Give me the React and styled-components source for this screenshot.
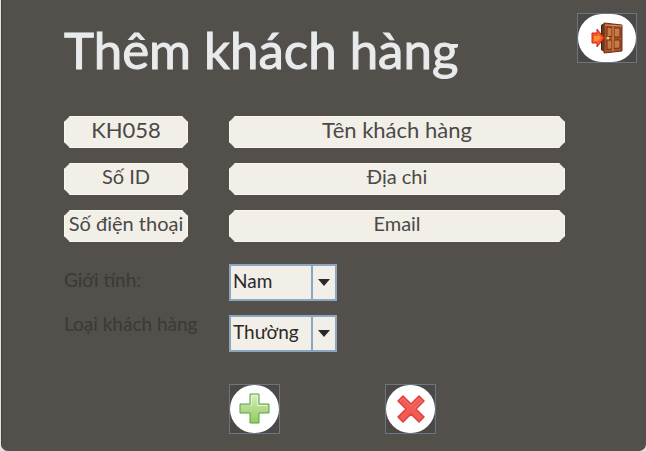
import React, { useState } from "react";
import styled, { createGlobalStyle } from "styled-components";

const GlobalStyle = createGlobalStyle`
  * { box-sizing: border-box; }
  body {
    margin: 0;
    background: #e4e5e6;
    font-family: Lato, "Noto Sans", sans-serif;
  }
`;

const Window = styled.main`
  min-height: 100vh;
  margin-left: 1px;
  padding: 13px 9px 17px 62px;
  background: #534f4a;
  border-left: 1px solid #45423f;
  border-radius: 0 0 7px 7px;
`;

const Header = styled.header`
  display: flex;
  align-items: flex-start;
  justify-content: space-between;
  min-height: 103px;
`;

const Title = styled.h1`
  margin: 4px 0 0;
  color: #e9eaec;
  font-size: 51px;
  font-weight: 400;
  line-height: 66px;
  white-space: nowrap;
  -webkit-text-stroke: 1px #e9eaec;
`;

const Form = styled.form`
  padding-right: 72px;
`;

const Fields = styled.div`
  display: grid;
  grid-template-columns: 124px minmax(0, 1fr);
  gap: 15px 41px;
`;

const TextField = styled.input`
  width: 100%;
  height: 32px;
  padding: 0 0 6px;
  border: 1px solid #faf6ee;
  border-radius: 0;
  background: #f2eee8;
  color: #4b4947;
  font-family: inherit;
  font-size: ${(p) => (p.$large ? "22px" : "20px")};
  text-align: center;
  clip-path: polygon(6px 0, calc(100% - 6px) 0, 100% 6px, 100% calc(100% - 6px),
    calc(100% - 6px) 100%, 6px 100%, 0 calc(100% - 6px), 0 6px);
`;

const Choices = styled.div`
  display: grid;
  grid-template-columns: 149px 108px;
  gap: 14px 16px;
  margin-top: 22px;
`;

const ChoiceLabel = styled.label`
  padding-top: ${(p) => p.$top};
  color: #393a39;
  font-size: 19px;
  line-height: ${(p) => p.$line};
  white-space: nowrap;
`;

const SelectBox = styled.div`
  display: flex;
  position: relative;
  height: 37px;
`;

const Select = styled.select`
  width: 100%;
  padding: 0 26px 5px 2px;
  appearance: none;
  border: 2px solid #8ba6c1;
  border-radius: 0;
  background: #f2eee8;
  color: #2b2928;
  font-family: inherit;
  font-size: 19px;
`;

const ArrowCell = styled.span`
  position: absolute;
  inset: 2px 2px 2px auto;
  display: grid;
  place-items: center;
  width: 24px;
  border-left: 2px solid #8ba6c1;
  pointer-events: none;
`;

const Actions = styled.div`
  display: flex;
  gap: 105px;
  margin: 32px 0 0 165px;
`;

const IconButton = styled.button`
  display: grid;
  flex: none;
  width: ${(p) => (p.$wide ? "60px" : "51px")};
  height: 50px;
  padding: 0;
  border: 1px solid #697785;
  background: #4b4846;
  cursor: pointer;
`;

const Disc = styled.span`
  display: grid;
  place-items: center;
  border-radius: 24px;
  background: #fff;
`;

function Arrow() {
  return (
    <svg width="12" height="7" viewBox="0 0 12 7" aria-hidden="true">
      <path d="M0 0h12L6 7z" fill="#292929" />
    </svg>
  );
}

function DoorIcon() {
  return (
    <svg width="34" height="32" viewBox="0 0 34 32" aria-hidden="true">
      <path d="M11 3l4-2v29l-4-2z" fill="#302720" />
      <path d="M12 2h3v27h-3z" fill="#6b3a20" />
      <path d="M14 1l18 2v26l-18 2z" fill="#a75228" stroke="#6c2e17" />
      <path d="M17 5l5 .5v9H17zM24 6h6v9h-6zM17 18h5v9l-5 .5zM24 18h6v8l-6 .5z"
        fill="#c87a43" stroke="#713016" />
      <path d="M15 3l17 1M23 5v24" stroke="#de9960" fill="none" />
      <circle cx="18" cy="16" r="1.5" fill="#efc16b" />
      <path d="M2 11h5V7l7 9-7 9v-4H2z" fill="#f25b22" stroke="#d4241d" strokeLinejoin="round" />
      <path d="M4 14h4v-2l3 4-3 3H4z" fill="#ff8b38" />
    </svg>
  );
}

function PlusIcon() {
  return (
    <svg width="32" height="32" viewBox="0 0 32 32" aria-hidden="true">
      <defs>
        <linearGradient id="leaf" x2="0" y2="1">
          <stop stopColor="#dcf0c2" />
          <stop offset=".5" stopColor="#b4db8c" />
          <stop offset="1" stopColor="#8fcf5c" />
        </linearGradient>
      </defs>
      <path d="M11 1h9v10h10v9H20v10h-9V20H1v-9h10z" fill="url(#leaf)"
        stroke="#5b9f48" strokeLinejoin="round" />
      <path d="M12.5 12.5v-10h6v10h10" fill="none" stroke="#e3f4cf" />
    </svg>
  );
}

function CrossIcon() {
  return (
    <svg width="30" height="30" viewBox="0 0 30 30" aria-hidden="true">
      <path d="M7 2l8 8 8-8 5 5-8 8 8 8-5 5-8-8-8 8-5-5 8-8-8-8z" fill="#f15b55"
        stroke="#e2403c" strokeWidth="1.5" strokeLinejoin="round" />
      <path d="M4 7l3-3 8 8 8-8 3 3-8 8" fill="none" stroke="#f5776f" />
    </svg>
  );
}

const initialFields = [
  { name: "Mã khách hàng", value: "KH058", large: true },
  { name: "Tên khách hàng", value: "Tên khách hàng", large: true },
  { name: "Số ID", value: "Số ID" },
  { name: "Địa chỉ", value: "Địa chi" },
  { name: "Số điện thoại", value: "Số điện thoại" },
  { name: "Email", value: "Email" },
];

function Choice({ id, label, top, line, options }) {
  return (
    <>
      <ChoiceLabel htmlFor={id} $top={top} $line={line}>{label}</ChoiceLabel>
      <SelectBox>
        <Select id={id}>
          {options.map((option) => <option key={option}>{option}</option>)}
        </Select>
        <ArrowCell><Arrow /></ArrowCell>
      </SelectBox>
    </>
  );
}

export default function App() {
  const [fields, setFields] = useState(initialFields);
  const update = (index, value) =>
    setFields(fields.map((field, i) => (i === index ? { ...field, value } : field)));

  return (
    <>
      <GlobalStyle />
      <Window>
        <Header>
          <Title>Thêm khách hàng</Title>
          <IconButton type="button" $wide aria-label="Thoát">
            <Disc><DoorIcon /></Disc>
          </IconButton>
        </Header>
        <Form onSubmit={(event) => event.preventDefault()}>
          <Fields>
            {fields.map((field, index) => (
              <TextField
                key={field.name}
                aria-label={field.name}
                value={field.value}
                $large={field.large}
                onChange={(event) => update(index, event.target.value)}
              />
            ))}
          </Fields>
          <Choices>
            <Choice id="gender" label="Giới tính:" top="4px" line="24px" options={["Nam", "Nữ"]} />
            <Choice id="type" label="Loại khách hàng" top="0" line="18px" options={["Thường", "VIP"]} />
          </Choices>
          <Actions>
            <IconButton type="submit" aria-label="Thêm">
              <Disc><PlusIcon /></Disc>
            </IconButton>
            <IconButton type="button" aria-label="Hủy">
              <Disc><CrossIcon /></Disc>
            </IconButton>
          </Actions>
        </Form>
      </Window>
    </>
  );
}
